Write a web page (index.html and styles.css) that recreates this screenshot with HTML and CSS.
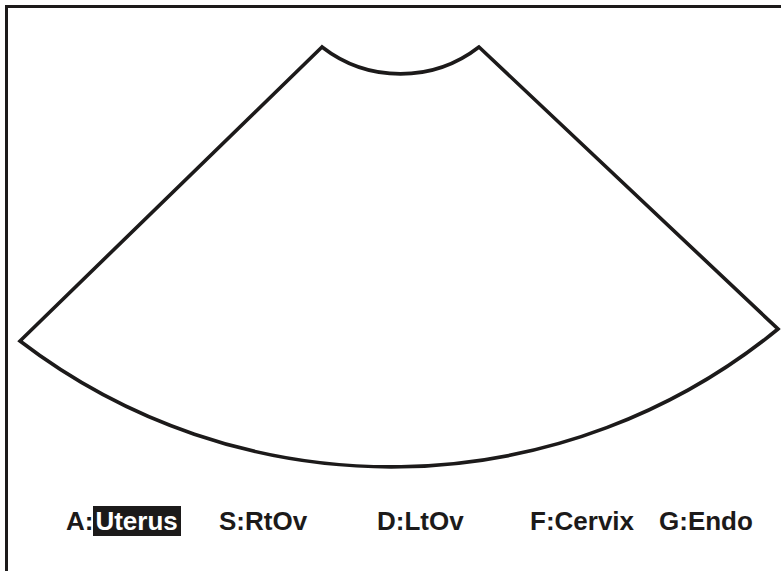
FILE: index.html
```html
<!DOCTYPE html>
<html>
<head>
<meta charset="utf-8">
<link rel="stylesheet" href="styles.css">
</head>
<body>
<div class="frame">
  <svg class="fan" width="773" height="498" viewBox="8 8 773 498" xmlns="http://www.w3.org/2000/svg">
    <path d="M322,47 L20,341 A611,611 0 0,0 778,329 L479,47 A128,128 0 0,1 322,47 Z" fill="none" stroke="#1c1a1a" stroke-width="3.6" stroke-linejoin="miter"/>
  </svg>
  <div class="labels">
    <span class="lbl">A:<span class="sel">Uterus</span></span>
    <span class="lbl">S:RtOv</span>
    <span class="lbl">D:LtOv</span>
    <span class="lbl">F:Cervix</span>
    <span class="lbl">G:Endo</span>
  </div>
</div>
</body>
</html>
```
FILE: styles.css
```css
html, body {
  margin: 0;
  padding: 0;
  background: #ffffff;
}
body {
  width: 781px;
  height: 571px;
  overflow: hidden;
}
.frame {
  margin: 5px 0 0 5px;
  border-top: 3px solid #1c1a1a;
  border-left: 3px solid #1c1a1a;
  height: 566px;
  box-sizing: border-box;
}
.fan {
  display: block;
}
.labels {
  display: grid;
  grid-template-columns: 153px 158px 153px 129px auto;
  padding-left: 58px;
  font-family: "Liberation Sans", Arial, sans-serif;
  font-weight: bold;
  font-size: 26px;
  line-height: 30px;
  color: #1c1a1a;
}
.lbl {
  white-space: nowrap;
}
.sel {
  background: #1c1a1a;
  color: #ffffff;
  padding: 0 3px 0 2px;
}
```
